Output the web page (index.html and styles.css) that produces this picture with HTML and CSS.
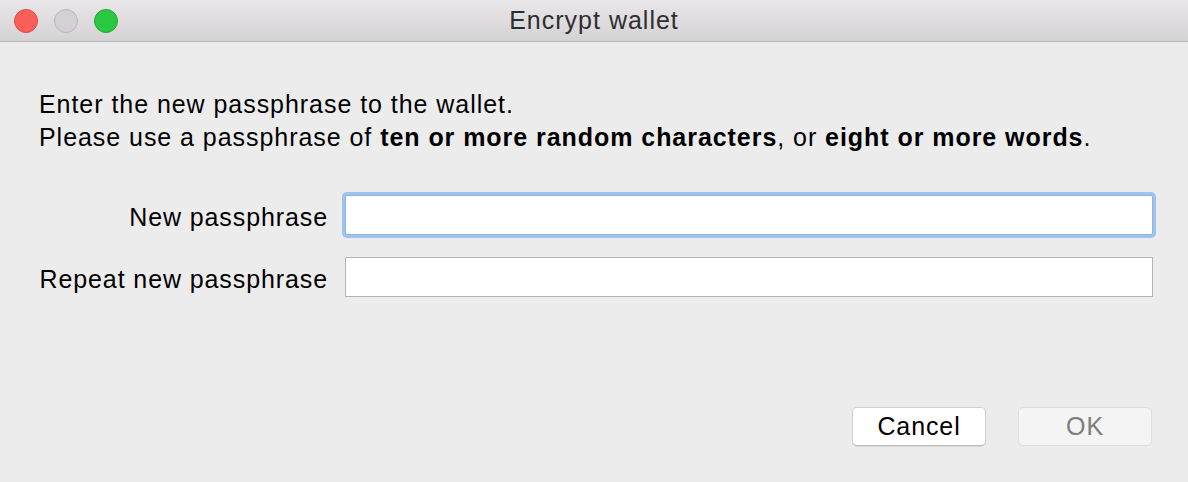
FILE: index.html
```html
<!DOCTYPE html>
<html>
<head>
<meta charset="utf-8">
<link rel="stylesheet" href="styles.css">
</head>
<body>
<div class="window">
  <div class="titlebar">
    <div class="lights">
      <span class="light close"></span>
      <span class="light min"></span>
      <span class="light zoom"></span>
    </div>
    <div class="title">Encrypt wallet</div>
    <div></div>
  </div>
  <div class="content">
    <div class="intro">
      <div>Enter the new passphrase to the wallet.</div>
      <div>Please use a passphrase of <b>ten or more random characters</b>, or <b>eight or more words</b>.</div>
    </div>
    <div class="form">
      <label class="label">New passphrase</label>
      <div class="field focused"></div>
      <label class="label">Repeat new passphrase</label>
      <div class="field"></div>
    </div>
    <div class="footer">
      <div class="btn">Cancel</div>
      <div class="btn disabled">OK</div>
    </div>
  </div>
</div>
</body>
</html>
```
FILE: styles.css
```css
html, body {
  margin: 0;
  padding: 0;
}
body {
  width: 1188px;
  height: 482px;
  overflow: hidden;
  background: #ececec;
  font-family: "Liberation Sans", Arial, sans-serif;
  font-size: 25px;
  color: #000;
}
.window {
  width: 1188px;
  height: 482px;
  display: flex;
  flex-direction: column;
}
.titlebar {
  height: 41px;
  border-bottom: 1px solid #b9b7b9;
  background: linear-gradient(#e9e7e9, #d4d2d4);
  display: grid;
  grid-template-columns: 1fr auto 1fr;
  align-items: center;
}
.lights {
  display: flex;
  gap: 16px;
  padding-left: 14px;
}
.light {
  width: 24px;
  height: 24px;
  box-sizing: border-box;
  border-radius: 50%;
  display: block;
}
.close { background: #fc5f57; border: 1px solid #df4a43; }
.min { background: #d3d1d3; border: 1px solid #b9b7b9; }
.zoom { background: #2ac840; border: 1px solid #22a833; }
.title {
  line-height: 41px;
  color: #2e2e2e;
  letter-spacing: 1px;
}
.content {
  padding: 46px 35px 0 39px;
  display: flex;
  flex-direction: column;
}
.intro {
  line-height: 33px;
  letter-spacing: 0.95px;
}
.form {
  margin-top: 41px;
  display: grid;
  grid-template-columns: 288px 808px;
  column-gap: 18px;
  row-gap: 22px;
}
.label {
  text-align: right;
  line-height: 36px;
  padding-top: 4px;
  height: 40px;
  box-sizing: border-box;
  letter-spacing: 0.9px;
  margin-right: -1px;
}
.field {
  height: 40px;
  box-sizing: border-box;
  background: #fff;
  border: 1px solid #b4b4b4;
}
.field.focused {
  border: 1px solid #8fb6e3;
  box-shadow: 0 0 0 3px #9dc3ee;
  border-radius: 2px;
}
.footer {
  margin-top: 110px;
  display: flex;
  justify-content: flex-end;
  gap: 32px;
  padding-right: 1px;
}
.btn {
  width: 134px;
  height: 39px;
  box-sizing: border-box;
  border: 1px solid #cfcfcf;
  border-bottom-color: #b8b8b8;
  border-radius: 5px;
  background: #fff;
  text-align: center;
  line-height: 37px;
  letter-spacing: 0.9px;
  box-shadow: 0 1px 1px rgba(0,0,0,0.08);
}
.btn.disabled {
  background: #f4f4f4;
  border-color: #dedede;
  color: #7d7d7d;
  box-shadow: none;
}
```
